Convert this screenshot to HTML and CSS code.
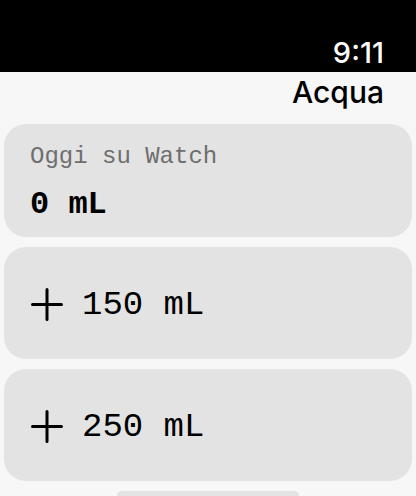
FILE: index.html
```html
<!DOCTYPE html>
<html>
<head>
<meta charset="utf-8">
<link rel="stylesheet" href="styles.css">
</head>
<body>
<div class="status"><span class="time">9:11</span></div>
<div class="title">Acqua</div>
<div class="list">
  <div class="card summary">
    <div class="label">Oggi su Watch</div>
    <div class="value">0 mL</div>
  </div>
  <div class="card action">
    <svg class="plus" viewBox="0 0 32 33" width="32" height="33"><path d="M16 1.5V31.5M1.5 16.5H30.5" stroke="#000" stroke-width="3" stroke-linecap="round"/></svg>
    <span class="amount">150 mL</span>
  </div>
  <div class="card action">
    <svg class="plus" viewBox="0 0 32 33" width="32" height="33"><path d="M16 1.5V31.5M1.5 16.5H30.5" stroke="#000" stroke-width="3" stroke-linecap="round"/></svg>
    <span class="amount">250 mL</span>
  </div>
  <div class="peek"></div>
</div>
</body>
</html>
```
FILE: styles.css
```css
html, body {
  margin: 0;
  padding: 0;
  background: #f7f7f7;
  height: 496px;
  overflow: hidden;
}
.status {
  height: 72px;
  background: #000;
  display: flex;
  justify-content: flex-end;
  align-items: flex-end;
  padding-right: 32px;
  box-sizing: border-box;
}
.time {
  color: #fff;
  font-family: Inter, "Noto Sans", sans-serif;
  font-weight: 500;
  font-size: 29px;
  line-height: 1;
  margin-bottom: 5px;
}
.title {
  height: 52px;
  text-align: right;
  padding-right: 32px;
  font-family: Inter, "Noto Sans", sans-serif;
  font-weight: 500;
  font-size: 30px;
  line-height: 40px;
  color: #000;
}
.list {
  display: flex;
  flex-direction: column;
  gap: 10px;
  padding: 0 4px;
}
.card {
  background: #e3e3e3;
  border-radius: 22px;
  box-sizing: border-box;
  font-family: "Liberation Mono", "DejaVu Sans Mono", monospace;
}
.summary {
  height: 113px;
  padding: 19px 26px 0;
}
.label {
  color: #6e6e6e;
  font-size: 24px;
  line-height: 28px;
}
.value {
  margin-top: 15px;
  font-size: 32px;
  font-weight: bold;
  line-height: 38px;
  color: #000;
}
.action {
  height: 112px;
  display: flex;
  align-items: center;
  padding-left: 27px;
  padding-top: 3px;
  gap: 19px;
}
.amount {
  font-size: 34px;
  line-height: 40px;
  color: #000;
}
.peek {
  margin: 0 auto;
  width: 182px;
  height: 5px;
  background: #e3e3e3;
  border-radius: 5px 5px 0 0;
}
```
